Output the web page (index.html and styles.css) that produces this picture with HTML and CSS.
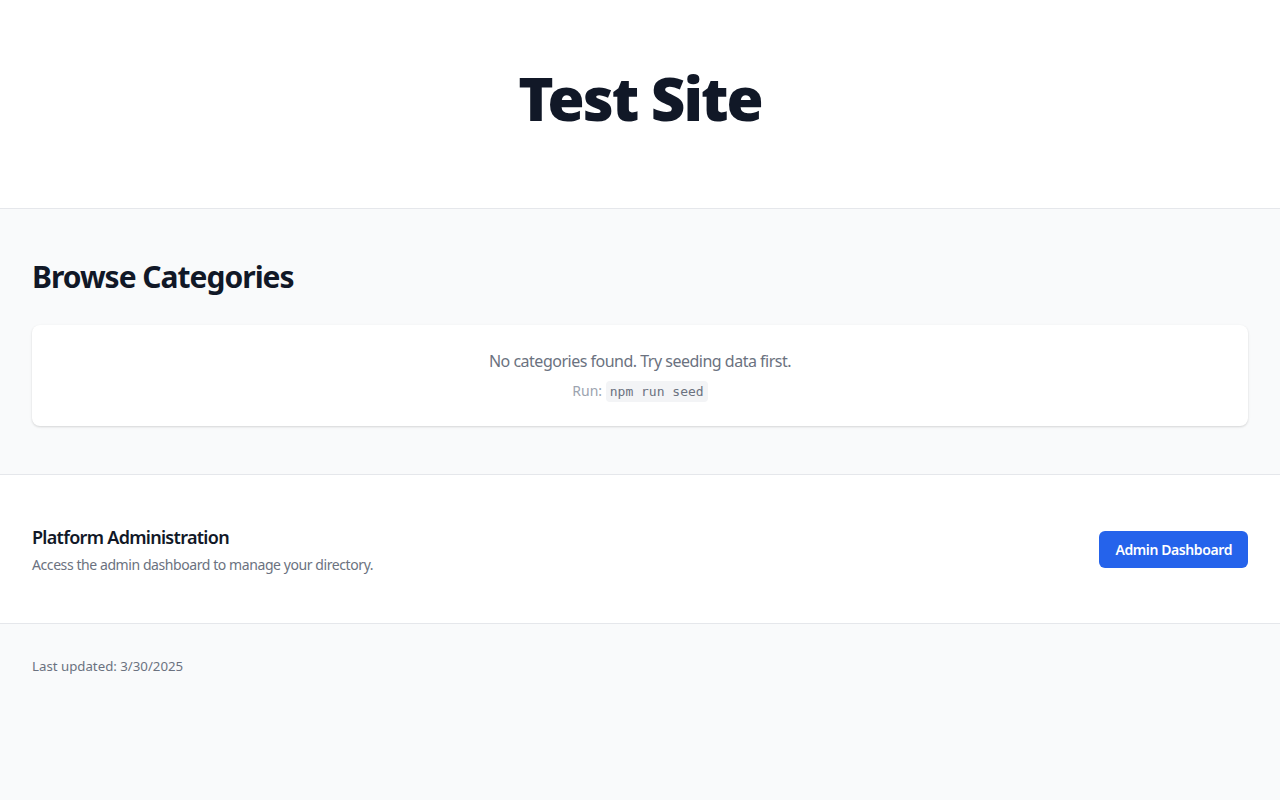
FILE: index.html
```html
<!DOCTYPE html>
<html lang="en">
<head>
<meta charset="utf-8">
<title>Test Site</title>
<link rel="stylesheet" href="styles.css">
</head>
<body>
<header class="site-header">
  <h1 class="site-title">Test Site</h1>
</header>
<main>
  <section class="categories">
    <div class="container">
      <h2 class="section-title">Browse Categories</h2>
      <div class="empty-card">
        <p class="empty-text">No categories found. Try seeding data first.</p>
        <p class="empty-hint">Run: <code class="code">npm run seed</code></p>
      </div>
    </div>
  </section>
  <section class="admin">
    <div class="container admin-row">
      <div class="admin-info">
        <h3 class="admin-title">Platform Administration</h3>
        <p class="admin-desc">Access the admin dashboard to manage your directory.</p>
      </div>
      <a class="btn-primary" href="#">Admin Dashboard</a>
    </div>
  </section>
</main>
<footer class="site-footer">
  <div class="container">
    <p class="updated">Last updated: 3/30/2025</p>
  </div>
</footer>
</body>
</html>
```
FILE: styles.css
```css
* { box-sizing: border-box; }
html, body { margin: 0; padding: 0; }
body {
  font-family: "Noto Sans", "Open Sans", sans-serif;
  background: #f9fafb;
  color: #111827;
  min-height: 800px;
}
p, h1, h2, h3 { margin: 0; }
.container { padding: 0 32px; }

.site-header {
  background: #fff;
  border-bottom: 1px solid #e5e7eb;
  height: 209px;
  display: flex;
  align-items: center;
  justify-content: center;
}
.site-title {
  font-size: 60px;
  line-height: 1;
  font-weight: 900;
  color: #111827;
  letter-spacing: -2px;
  margin-top: -12px;
}

.categories {
  padding: 50px 0 48px;
  border-bottom: 1px solid #e5e7eb;
}
.section-title {
  font-size: 30px;
  line-height: 36px;
  font-weight: 700;
  letter-spacing: -1px;
  margin-bottom: 30px;
}
.empty-card {
  background: #fff;
  border-radius: 8px;
  box-shadow: 0 1px 3px rgba(0,0,0,0.1), 0 1px 2px rgba(0,0,0,0.06);
  padding: 24px;
  text-align: center;
}
.empty-text {
  font-size: 16px;
  line-height: 24px;
  color: #6b7280;
  letter-spacing: -0.5px;
}
.empty-hint {
  margin-top: 8px;
  font-size: 14px;
  line-height: 20px;
  color: #9ca3af;
}
.code {
  font-family: "DejaVu Sans Mono", "Liberation Mono", monospace;
  font-size: 13px;
  background: #f3f4f6;
  color: #6b7280;
  padding: 3px 4px;
  border-radius: 4px;
}

.admin {
  background: #fff;
  padding: 48px 0;
  border-bottom: 1px solid #e5e7eb;
}
.admin-row {
  display: flex;
  align-items: center;
  justify-content: space-between;
}
.admin-title {
  font-size: 18px;
  line-height: 28px;
  font-weight: 600;
  color: #111827;
  letter-spacing: -0.7px;
}
.admin-desc {
  margin-top: 4px;
  font-size: 14px;
  line-height: 20px;
  color: #6b7280;
  letter-spacing: -0.42px;
}
.btn-primary {
  display: inline-block;
  background: #2563eb;
  color: #fff;
  text-decoration: none;
  font-size: 14px;
  font-weight: 600;
  line-height: 21px;
  letter-spacing: -0.4px;
  padding: 8px 16px;
  border-radius: 6px;
}

.site-footer {
  padding: 32px 0;
}
.updated {
  font-size: 13.25px;
  line-height: 20px;
  color: #6b7280;
}
```
